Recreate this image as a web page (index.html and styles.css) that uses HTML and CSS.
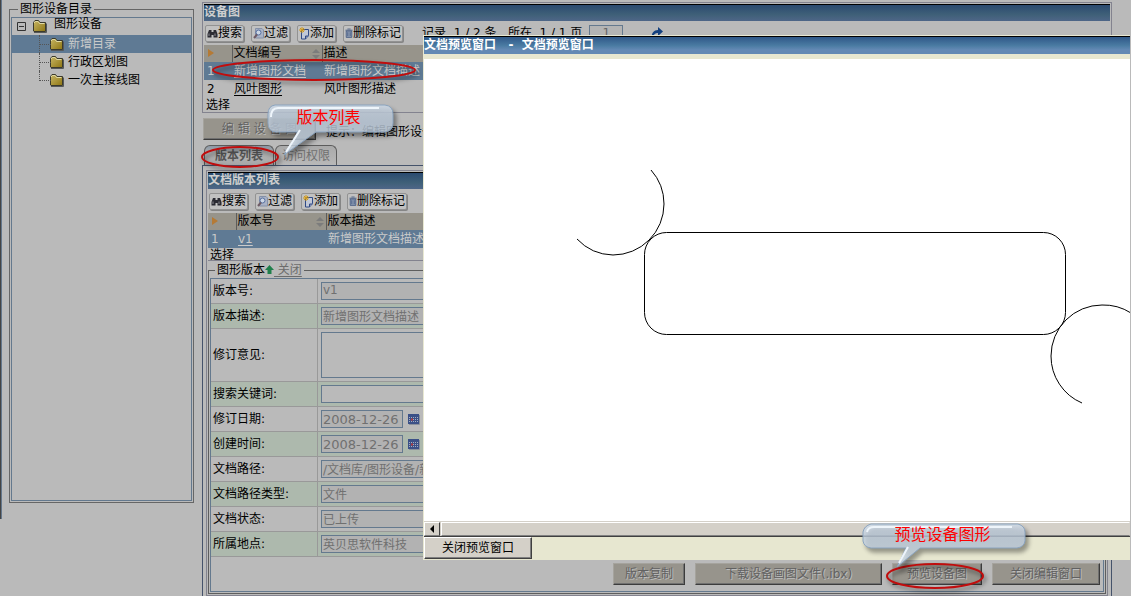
FILE: index.html
```html
<!DOCTYPE html>
<html lang="zh-CN">
<head>
<meta charset="utf-8">
<title>图形设备目录</title>
<link rel="stylesheet" href="styles.css">
</head>
<body>
<svg class="defs" aria-hidden="true">
  <defs>
    <linearGradient id="gold" x1="0" y1="0" x2="1" y2="1"><stop offset="0" stop-color="#c9b765"/><stop offset="1" stop-color="#8d7512"/></linearGradient>
    <linearGradient id="glass" x1="0" y1="0" x2="0" y2="1"><stop offset="0" stop-color="#cfdcea"/><stop offset=".35" stop-color="#c2d1e2"/><stop offset="1" stop-color="#cddbe9"/></linearGradient>
  </defs>
  <symbol id="folder" viewBox="0 0 14 13"><path d="M1 12.500H13.500V3.500" fill="none" stroke="#55585a"/><path d="M.5 11V2.500L2 .5H5.500L7 2.500H12.500V11.500H1Z" fill="url(#gold)" stroke="#3b3a2c"/><path d="M1.500 3V2L2.500 1.500H5L6.500 3.500H11.500" fill="none" stroke="#e0d9a5"/></symbol>
  <symbol id="binoc" viewBox="0 0 11 11"><path d="M2 2H4.500V4H6.500V2H9L10.500 6V9.500H6.500V7H4.500V9.500H.5V6Z" fill="#2b2b33"/><path d="M2 5.500V8M8 5.500V8" stroke="#8a8a92"/></symbol>
  <symbol id="filter" viewBox="0 0 11 11"><path d="M2.500.5H9L10.500 2V10H2.500Z" fill="#a9b2c6" stroke="#8490a8"/><circle cx="5.500" cy="4.500" r="2.500" fill="#ccd6e4" stroke="#5870a0"/><path d="M4 6.500L1 10" stroke="#6e5a64" stroke-width="2"/></symbol>
  <symbol id="add" viewBox="0 0 11 13"><path d="M2.500 2.500H9.500V8.500L6.500 12H2.500Z" fill="#c2c8d6" stroke="#304a86"/><path d="M6.500 12V9H9.500" fill="#8492b8" stroke="#304a86"/><path d="M3 0V6M0 3H6M1 1L5 5M5 1L1 5" stroke="#d29a16"/></symbol>
  <symbol id="bin" viewBox="0 0 10 12"><path d="M1.500 3.500H8.500V11.500H1.500Z" fill="#8c9ab2" stroke="#40577f"/><path d="M.5 2.500H9.500M3 1H7" stroke="#40577f"/><path d="M3.500 5V10M6.500 5V10" stroke="#40577f"/></symbol>
  <symbol id="cal" viewBox="0 0 12 11"><path d="M0 0H11V10H0Z" fill="#3b5087"/><path d="M1 3.500H10M1 5.500H10M1 7.500H10" stroke="#a5aec0" stroke-dasharray="1 1"/><path d="M3 5.500H5" stroke="#b33a40" stroke-width="2"/><path d="M11.500 1V10.500H1" fill="none" stroke="#8a909c"/></symbol>
  <symbol id="sort" viewBox="0 0 8 10"><path d="M0 4L4 0L8 4ZM0 6L4 10L8 6Z" fill="#7c7c7c"/></symbol>
</svg>

<div class="page">
  <div class="edge"></div>

  <fieldset class="tree">
    <legend>图形设备目录</legend>
    <ul class="nodes">
      <li class="node root"><button class="toggle" type="button" aria-label="折叠"><svg viewBox="0 0 9 9"><path d="M.5.5H8.500V8.500H.5ZM2 4.500H7" fill="none" stroke="#333"/></svg></button><svg class="folder"><use href="#folder"/></svg><span>图形设备</span></li>
      <li class="node child selected"><svg class="folder"><use href="#folder"/></svg><span>新增目录</span></li>
      <li class="node child"><svg class="folder"><use href="#folder"/></svg><span>行政区划图</span></li>
      <li class="node child last"><svg class="folder"><use href="#folder"/></svg><span>一次主接线图</span></li>
    </ul>
  </fieldset>

  <main class="main">
    <section class="panel">
      <h2 class="bar">设备图</h2>
      <div class="tools">
        <button type="button"><svg class="i11"><use href="#binoc"/></svg>搜索</button>
        <button type="button"><svg class="i11"><use href="#filter"/></svg>过滤</button>
        <button type="button"><svg class="i13"><use href="#add"/></svg>添加</button>
        <button type="button"><svg class="i10"><use href="#bin"/></svg>删除标记</button>
        <label class="pager" for="pg">记录&nbsp; 1 / 2 条 . 所在&nbsp; 1 / 1 页</label>
        <input class="pg" id="pg" value="1">
        <button class="go" type="button" aria-label="转到"><svg viewBox="0 0 12 12"><path d="M1 11C0 6 3 3 7 3V0L12 4.500L7 9V6C4 6 2 8 1 11Z" fill="#13407f"/></svg></button>
      </div>
      <table class="grid">
        <colgroup><col class="c0"><col class="c1"><col></colgroup>
        <thead><tr><th><svg class="tri" viewBox="0 0 6 8"><path d="M0 0L6 4L0 8Z" fill="#b57a35"/></svg></th><th><div class="sorted">文档编号<svg class="sort"><use href="#sort"/></svg></div></th><th>描述</th></tr></thead>
        <tbody>
          <tr class="selected"><td>1</td><td><a href="#">新增图形文档</a></td><td>新增图形文档描述</td></tr>
          <tr><td>2</td><td><a href="#">风叶图形</a></td><td>风叶图形描述</td></tr>
        </tbody>
      </table>
      <div class="pick">选择</div>
    </section>

    <div class="editline"><button class="btn edit" type="button">编 辑 设 备 图</button><span>提示：编辑图形设备</span></div>

    <div class="tabs" role="tablist">
      <button class="tab active" role="tab" aria-selected="true" type="button">版本列表</button>
      <button class="tab" role="tab" aria-selected="false" type="button">访问权限</button>
    </div>

    <div class="tabpage">
      <section class="version">
        <h2 class="bar">文档版本列表</h2>
        <div class="tools">
          <button type="button"><svg class="i11"><use href="#binoc"/></svg>搜索</button>
          <button type="button"><svg class="i11"><use href="#filter"/></svg>过滤</button>
          <button type="button"><svg class="i13"><use href="#add"/></svg>添加</button>
          <button type="button"><svg class="i10"><use href="#bin"/></svg>删除标记</button>
        </div>
        <table class="grid">
          <colgroup><col class="c0"><col class="c1"><col></colgroup>
          <thead><tr><th><svg class="tri" viewBox="0 0 6 8"><path d="M0 0L6 4L0 8Z" fill="#b57a35"/></svg></th><th><div class="sorted">版本号<svg class="sort"><use href="#sort"/></svg></div></th><th>版本描述</th></tr></thead>
          <tbody><tr class="selected"><td>1</td><td><a href="#">v1</a></td><td>新增图形文档描述</td></tr></tbody>
        </table>
        <div class="pick ruled">选择</div>

        <fieldset class="detail">
          <legend>图形版本<svg class="up" viewBox="0 0 9 9"><path d="M4.500 0L9 5H6.500V9H2.500V5H0Z" fill="#1f7f4b"/></svg><a href="#">&nbsp;关闭</a></legend>
          <form class="form">
            <div class="row"><label for="f1">版本号:</label><div><input id="f1" value="v1"></div></div>
            <div class="row alt"><label for="f2">版本描述:</label><div><input id="f2" value="新增图形文档描述"></div></div>
            <div class="row tall"><label for="f3">修订意见:</label><div><textarea id="f3"></textarea></div></div>
            <div class="row alt"><label for="f4">搜索关键词:</label><div><input id="f4" class="open"></div></div>
            <div class="row"><label for="f5">修订日期:</label><div><input id="f5" class="date" value="2008-12-26"><svg class="cal"><use href="#cal"/></svg></div></div>
            <div class="row alt"><label for="f6">创建时间:</label><div><input id="f6" class="date" value="2008-12-26"><svg class="cal"><use href="#cal"/></svg></div></div>
            <div class="row"><label for="f7">文档路径:</label><div><input id="f7" value="/文档库/图形设备/新增目录"></div></div>
            <div class="row alt"><label for="f8">文档路径类型:</label><div><input id="f8" value="文件"></div></div>
            <div class="row"><label for="f9">文档状态:</label><div><input id="f9" value="已上传"></div></div>
            <div class="row alt"><label for="f10">所属地点:</label><div><input id="f10" value="英贝思软件科技"></div></div>
            <div class="actions">
              <button class="btn w1" type="button">版本复制</button>
              <button class="btn w2" type="button">下载设备画图文件(.ibx)</button>
              <button class="btn w3" type="button">预览设备图</button>
              <button class="btn w4" type="button">关闭编辑窗口</button>
            </div>
          </form>
        </fieldset>
      </section>
    </div>
  </main>
</div>

<div class="dialog" role="dialog" aria-labelledby="dlg">
  <h2 class="bar" id="dlg">文档预览窗口&nbsp;&nbsp; -&nbsp; 文档预览窗口</h2>
  <svg class="drawing" role="img" aria-label="图形"><g fill="none" stroke="#000"><rect x="220.500" y="173.500" width="421" height="102" rx="22"/><path d="M227 111A51 51 0 0 1 240 145A51 51 0 0 1 189 196A51 51 0 0 1 153 180"/><path d="M658 344A51 51 0 0 1 627 297A51 51 0 0 1 678 246A51 51 0 0 1 707 254"/></g></svg>
  <div class="scroll"><button type="button" aria-label="向左"><svg viewBox="0 0 4 8"><path d="M4 0V8L0 4Z"/></svg></button><div class="thumb"></div></div>
  <div class="foot"><button type="button">关闭预览窗口</button></div>
</div>

<svg class="ring r1" viewBox="0 0 208 30"><ellipse cx="103" cy="13" rx="101" ry="10"/></svg>
<svg class="ring r2" viewBox="0 0 84 30"><ellipse cx="41" cy="13" rx="38" ry="10"/></svg>
<svg class="ring r3" viewBox="0 0 104 34"><ellipse cx="51" cy="15" rx="48" ry="12"/></svg>

<div class="callout k1"><svg viewBox="0 0 136 60"><path class="body" d="M8 2H118Q126 3 126 11V20Q126 28 118 29H49L17 52L31 29H8Q1 28 1 20V11Q1 3 8 2Z"/><path class="shine" d="M4 14Q4 5 11 5H112M33 27L19 49"/></svg><span>版本列表</span></div>
<div class="callout k2"><svg viewBox="0 0 174 56"><path class="body" d="M9 2H156Q163 4 163 10V19Q162 25 155 26H58L35 45L44 26H9Q2 25 1 19V10Q2 4 9 2Z"/><path class="shine" d="M5 10Q6 5 12 5H150M46 25L37 41"/></svg><span>预览设备图形</span></div>
</body>
</html>
```

FILE: styles.css
```css
* { box-sizing: border-box; }

body {
  margin: 0;
  position: relative;
  min-height: 100vh;
  overflow: hidden;
  background: #bababa;
  color: #000;
  font: 12px/14px "DejaVu Sans", "Noto Sans CJK SC", sans-serif;
}

html { overflow: hidden; }
button, input, textarea { font: inherit; margin: 0; }
svg { flex: none; }
.defs { position: absolute; width: 0; height: 0; }
fieldset { margin: 0; min-width: 0; }

.page { display: flex; align-items: flex-start; height: 100vh; }
.edge { width: 2px; height: 519px; background: #64778c; border-left: 1px solid #444; }

/* Directory tree */
.tree {
  width: 185px;
  margin: 2px 8px 0 7px;
  padding: 1px;
  border: 1px solid #666;
}
.tree legend { margin-left: 7px; padding: 0 2px; }
.nodes {
  list-style: none;
  margin: 0;
  padding: 0;
  min-height: 484px;
  border: 1px solid #64798e;
}
.node { display: flex; align-items: center; height: 18px; }
.node.root { padding-left: 5px; gap: 7px; height: 17px; }
.node.root span { padding-bottom: 5px; }
.node.child { padding-left: 38px; gap: 4px; position: relative; }
.node.child::before {
  content: "";
  position: absolute;
  left: 27px;
  top: 0;
  width: 11px;
  height: 9px;
  border-left: 1px dotted #555;
  border-bottom: 1px dotted #555;
}
.node.child:not(.last)::after {
  content: "";
  position: absolute;
  left: 27px;
  top: 9px;
  height: 9px;
  border-left: 1px dotted #555;
}
.toggle { width: 9px; height: 9px; padding: 0; border: 0; background: none; display: flex; }
.toggle svg { width: 9px; height: 9px; }
.folder { width: 14px; height: 13px; }
.selected { background: #5f7a94; color: #cacaca; }

/* Main column */
.main { flex: 1; min-width: 0; padding: 2px 19px 0 0; }
.panel { border: 1px solid #83838f; padding: 1px; }
.bar {
  margin: 0;
  height: 17px;
  overflow: hidden;
  border-top: 1px solid #000;
  background: linear-gradient(#2b4a70, #3f6078 60%, #4e6688);
  color: #cecece;
  font-size: 12px;
  line-height: 14px;
}
.tools { display: flex; align-items: center; height: 24px; padding: 0 1px; gap: 7px; }
.tools button {
  display: flex;
  align-items: center;
  height: 17px;
  padding: 0 1px;
  border: 1px solid #929292;
  border-radius: 2px;
  background: #c1c1c1;
  box-shadow: 1px 1px 0 #858585;
}
.i11 { width: 11px; height: 11px; }
.i13 { width: 11px; height: 13px; }
.i10 { width: 8px; height: 12px; }
.pager { margin-left: 12px; white-space: pre; }
.pg {
  width: 34px;
  height: 17px;
  text-align: center;
  border: 1px solid #64798e;
  background: #b4b4b4;
  color: #666;
  padding: 0;
}
.tools .go { border: 0; background: none; box-shadow: none; margin-left: 20px; }
.go svg { width: 12px; height: 12px; }

.grid { width: 100%; table-layout: fixed; border-collapse: collapse; }
.c0 { width: 28px; }
.c1 { width: 90px; }
.grid th, .grid td {
  height: 17px;
  padding: 0 2px;
  line-height: 17px;
  text-align: left;
  font-weight: normal;
  white-space: nowrap;
}
.grid td { height: 18px; }
.grid th { background: #97948b; }
.grid th + th { border-left: 1px solid #5c5c5c; padding-left: 1px; }
.grid td:first-child { padding-left: 3px; }
.grid a, .detail a { color: inherit; text-underline-offset: 2px; }
.tri { width: 6px; height: 8px; margin-left: 2px; }
.sorted { display: flex; align-items: center; justify-content: space-between; }
.sort { width: 8px; height: 10px; }
.pick { height: 13px; padding-left: 2px; }
.ruled { border-bottom: 1px solid #83838f; }

.btn {
  height: 22px;
  padding: 0;
  border: 1px solid;
  border-color: #a5a39d #3c3c3c #3c3c3c #a5a39d;
  background: #97948c;
  color: #616161;
  text-shadow: 1px 1px 0 #bcbcbc;
  box-shadow: inset -1px -1px 0 #707070;
}
.editline { display: flex; gap: 10px; padding-top: 5px; height: 31px; white-space: nowrap; }
.editline span { padding-top: 7px; }
.edit { width: 113px; margin-left: 1px; }

.tabs { display: flex; gap: 1px; height: 21px; padding-left: 2px; align-items: flex-end; }
.tab {
  width: 62px;
  height: 20px;
  padding: 0;
  border: 1px solid #5c5c5c;
  border-bottom: 0;
  border-radius: 6px 6px 0 0;
  background: linear-gradient(#aaa, #b8b8b8);
  color: #707070;
}
.tab.active { width: 70px; background: linear-gradient(#8b98a6, #b4b4b4 40%, #a7a7a7); color: #555; font-weight: bold; }

.tabpage { border: 1px solid #45536b; padding: 4px 3px; }
.version { border: 1px solid #83838f; padding: 1px; }

/* Version details */
.detail { margin-top: 2px; border: 1px solid #5e5e5e; padding: 1px; }
.detail legend { margin-left: 5px; padding: 0 2px; }
.detail legend a { color: #6c6c6c; }
.up { width: 9px; height: 9px; }
.form { border: 1px solid #64798e; padding-bottom: 6px; }
.row { display: grid; grid-template-columns: 107px 1fr; min-height: 25px; border-bottom: 1px solid #999; }
.row label { display: flex; align-items: center; padding-left: 2px; border-right: 1px solid #999; }
.row > div { display: flex; align-items: center; gap: 5px; padding-left: 3px; }
.alt { background: #adb9ad; }
.row.tall { min-height: 53px; }
.row input, .row textarea {
  width: 100%;
  height: 18px;
  padding: 0 1px 2px;
  border: 1px solid #64798e;
  border-radius: 0;
  background: #b2b2b2;
  color: #707070;
}
.row textarea { height: 46px; resize: none; background: #bababa; }
.row input.open { background: #bababa; }
.row input.date { width: 82px; padding-bottom: 0; font-size: 13px; }
.cal { width: 12px; height: 11px; }
.actions { display: flex; justify-content: flex-end; gap: 10px; padding: 6px 3px 0; }
.w1 { width: 72px; }
.w2 { width: 187px; }
.w3 { width: 90px; }
.w4 { width: 108px; }

/* Preview dialog */
.dialog {
  position: absolute;
  left: 423px;
  right: 1px;
  top: 35px;
  border: solid #e8e8d2;
  border-width: 1px 0 0 1px;
  background: #e7e7d0;
}
.dialog .bar { height: 18px; color: #fff; line-height: 17px; background: linear-gradient(#2f5788, #4a7ba2 50%, #6389b4 75%, #6389b4); }
.drawing { display: block; width: 100%; height: 462px; margin-top: 5px; background: #fff; }
.scroll { display: flex; gap: 1px; height: 16px; background: #d4d0c8; border-top: 1px solid #d4d0c8; border-bottom: 1px solid #404040; }
.scroll button {
  display: flex;
  justify-content: center;
  align-items: center;
  width: 16px;
  padding: 0;
  border: 1px solid;
  border-color: #fff #404040 #808080 #fff;
  background: #d4d0c8;
}
.scroll svg { width: 4px; height: 8px; }
.thumb { flex: 1; border: 1px solid; border-color: #fff #d4d0c8 #808080 #fff; }
.foot { height: 23px; }
.foot button {
  width: 108px;
  height: 22px;
  padding: 0;
  border: 1px solid;
  border-color: #fff #404040 #404040 #fff;
  background: #d4d0c8;
  box-shadow: inset -1px -1px 0 #808080;
}

/* Annotations laid over the screen */
.ring { position: absolute; fill: none; stroke: #c00d0d; stroke-width: 2; filter: drop-shadow(2px 3px 2px rgba(0, 0, 0, .5)); }
.r1 { left: 211px; top: 57px; width: 208px; height: 30px; }
.r2 { left: 199px; top: 144px; width: 84px; height: 30px; }
.r3 { left: 884px; top: 561px; width: 104px; height: 34px; }
.callout { position: absolute; color: #f00; font-size: 16px; line-height: 20px; text-align: center; }
.callout svg { position: absolute; left: 0; top: 0; width: 100%; height: 100%; filter: drop-shadow(3px 4px 2px rgba(0, 0, 0, .45)); }
.callout span { position: relative; display: block; }
.body { fill: url(#glass); fill-opacity: .78; stroke: #8aa3be; stroke-width: 1; }
.shine { fill: none; stroke: #eef5fb; stroke-width: 2; }
.k1 { left: 267px; top: 103px; width: 136px; height: 60px; padding: 5px 13px 0 0; }
.k2 { left: 862px; top: 522px; width: 174px; height: 56px; padding: 3px 13px 0 0; }
```
